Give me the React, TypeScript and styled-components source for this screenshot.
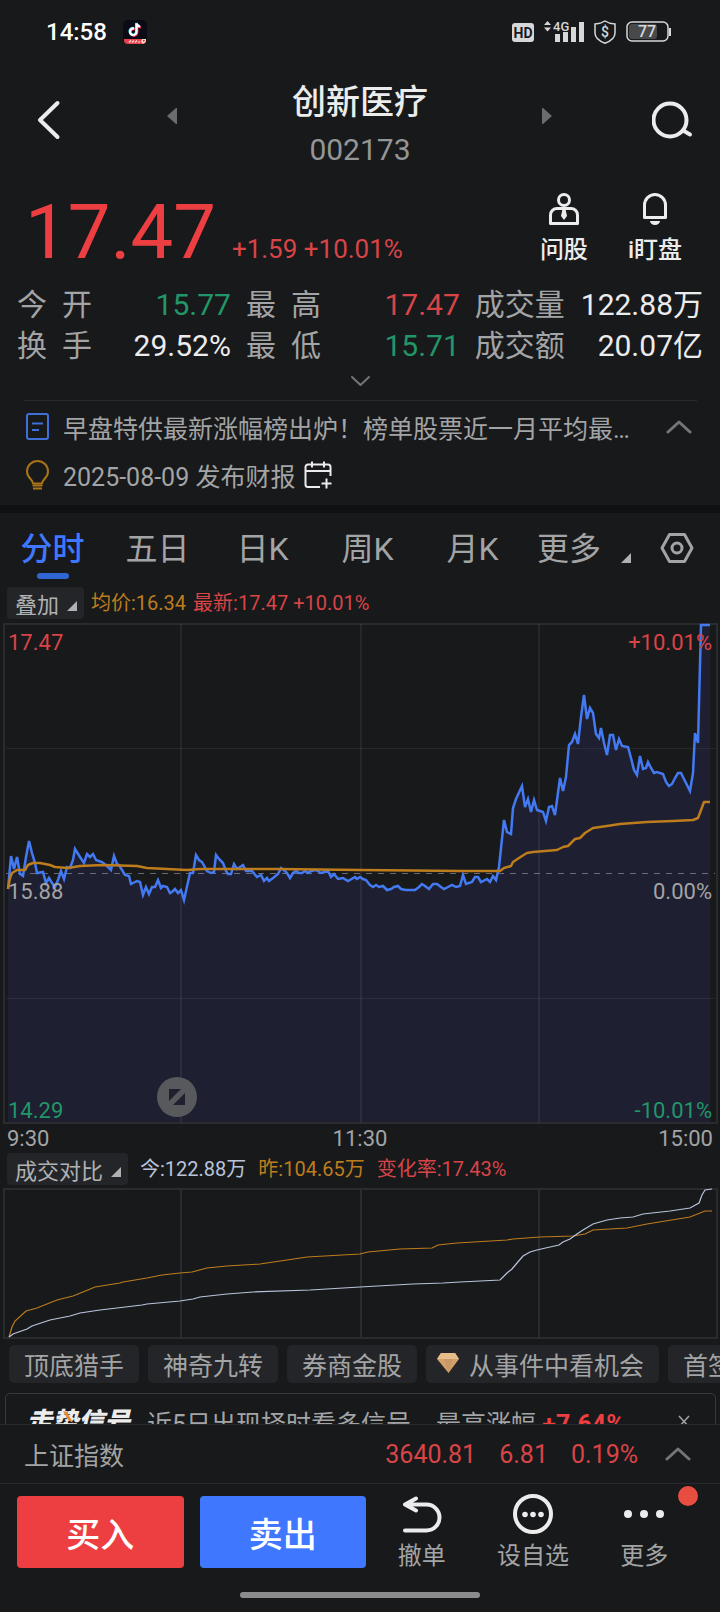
import React from "react";
import styled, { createGlobalStyle } from "styled-components";

const c = {
  bg: "#18191b",
  band: "#0f1113",
  line: "#292a2d",
  chip: "#232528",
  white: "#ececed",
  grey: "#a3a4a5",
  dim: "#747577",
  red: "#ed3e42",
  redText: "#d94447",
  green: "#229669",
  orange: "#bd7d1d",
  blue: "#3f78ff",
  pale: "#b9c4dc",
};

const Global = createGlobalStyle`
  *, *::before, *::after { box-sizing: border-box; }
  body { margin: 0; background: ${c.bg}; }
  body, button { font-family: Roboto, "Noto Sans CJK SC", sans-serif; }
  button { margin: 0; padding: 0; border: 0; background: none; color: inherit; cursor: pointer; }
  a { color: inherit; text-decoration: none; }
  svg { display: block; flex: none; }
  dl, dd, dt, h1, p { margin: 0; }
`;

const Page = styled.div`
  display: flex;
  flex-direction: column;
  height: 100vh;
  color: ${c.grey};
  background: ${c.bg};
`;

const Content = styled.main`
  flex: 1;
  min-height: 0;
  overflow: hidden;
`;

/* ---------- status bar ---------- */

const StatusBar = styled.div`
  display: flex;
  align-items: center;
  justify-content: space-between;
  height: 64px;
  padding: 0 48px 0 46px;
`;

const StatusGroup = styled.div<{ $gap: number }>`
  display: flex;
  align-items: center;
  gap: ${(p) => p.$gap}px;
`;

const Clock = styled.span`
  color: #fff;
  font-size: 24px;
  font-weight: 500;
  line-height: 32px;
`;

/* ---------- header ---------- */

const Header = styled.header`
  display: grid;
  grid-template-columns: 1fr 54% 1fr;
  height: 112px;
`;

const HeaderButton = styled.button<{ $end?: boolean }>`
  display: flex;
  align-items: center;
  justify-content: ${(p) => (p.$end ? "flex-end" : "flex-start")};
  padding: 0 26px 0 36px;
`;

const Switcher = styled.div`
  display: flex;
  justify-content: space-between;
`;

const StepButton = styled.button`
  display: flex;
  align-items: center;
  height: 104px;
`;

const Titles = styled.div`
  padding-top: 14px;
  text-align: center;
`;

const StockName = styled.h1`
  color: ${c.white};
  font-size: 34px;
  font-weight: 500;
  line-height: 48px;
`;

const StockCode = styled.p`
  margin-top: 4px;
  color: #949596;
  font-size: 30px;
  line-height: 40px;
`;

/* ---------- quote ---------- */

const Quote = styled.section`
  display: flex;
  justify-content: space-between;
  padding: 16px 38px 0 25px;
`;

const PriceLine = styled.div`
  display: flex;
  align-items: baseline;
  gap: 16px;
  height: 80px;
`;

const Price = styled.strong`
  color: ${c.red};
  font-size: 76px;
  font-weight: 400;
  line-height: 80px;
`;

const Change = styled.span`
  color: ${c.redText};
  font-size: 26px;
  line-height: 32px;
`;

const QuoteActions = styled.div`
  display: flex;
  gap: 40px;
  height: 80px;
`;

const QuoteAction = styled.button`
  display: flex;
  flex-direction: column;
  align-items: center;
  gap: 7px;
  color: ${c.white};
  font-size: 24px;
  font-weight: 500;
  line-height: 30px;
`;

const Stats = styled.dl`
  display: grid;
  grid-template-columns: 15fr 15fr 16fr;
  column-gap: 15px;
  margin-top: 12px;
  padding: 0 17px;
  font-size: 30px;
  line-height: 41px;
`;

const Stat = styled.div`
  display: flex;
  justify-content: space-between;
  height: 41px;
  white-space: nowrap;
`;

const StatLabel = styled.dt<{ $spread: boolean }>`
  width: ${(p) => (p.$spread ? "75px" : "auto")};
  text-align-last: justify;
`;

const StatValue = styled.dd<{ $color: string }>`
  color: ${(p) => p.$color};
`;

const ExpandButton = styled.button`
  display: flex;
  justify-content: center;
  width: 100%;
  height: 34px;
  padding-top: 9px;
`;

/* ---------- news ---------- */

const News = styled.section`
  margin: 0 23px 0 24px;
  padding: 2px 0 6px;
  border-top: 1px solid ${c.line};
`;

const NewsRow = styled.div`
  display: flex;
  align-items: center;
  height: 48px;
  font-size: 25px;
  white-space: nowrap;
`;

const NewsLink = styled.a`
  display: flex;
  align-items: center;
  gap: 13px;
  min-width: 0;
`;

const NewsToggle = styled.button`
  margin-left: auto;
  padding: 8px 5px;
`;

const CalendarButton = styled.button`
  margin-left: 8px;
`;

const Band = styled.div`
  height: 8px;
  background: ${c.band};
`;

/* ---------- tabs ---------- */

const Tabs = styled.div`
  display: grid;
  grid-template-columns: repeat(5, 105fr) 195fr;
  height: 72px;
  margin-bottom: 2px;
`;

const Tab = styled.button<{ $active?: boolean }>`
  position: relative;
  color: ${(p) => (p.$active ? c.blue : c.grey)};
  font-size: 32px;
  font-weight: ${(p) => (p.$active ? 500 : 400)};
  line-height: 72px;

  &::after {
    content: "";
    display: ${(p) => (p.$active ? "block" : "none")};
    position: absolute;
    bottom: 6px;
    left: calc(50% - 16px);
    width: 32px;
    height: 6px;
    border-radius: 3px;
    background: #2f66d2;
  }
`;

const TabsEnd = styled.div`
  display: flex;
  justify-content: space-between;
  padding: 0 26px 0 12px;
`;

const MoreTab = styled(Tab)`
  display: flex;
  align-items: center;
  gap: 20px;

  > svg {
    margin-top: 18px;
  }
`;

/* ---------- charts ---------- */

const Legend = styled.div<{ $gap: number }>`
  display: flex;
  align-items: center;
  gap: ${(p) => p.$gap}px;
  height: 32px;
  padding-left: 7px;
  font-size: 20px;
  line-height: 32px;
  white-space: nowrap;
`;

const OverlayButton = styled.button`
  display: flex;
  align-items: center;
  gap: 8px;
  height: 32px;
  padding: 0 7px 0 8px;
  border-radius: 4px;
  background: ${c.chip};
  color: #b0b1b2;
  font-size: 22px;

  > svg {
    margin-top: 6px;
  }
`;

const LegendItem = styled.span<{ $color: string }>`
  color: ${(p) => p.$color};
`;

const ChartBox = styled.div<{ $height: number; $top: number }>`
  position: relative;
  height: ${(p) => p.$height}px;
  margin: ${(p) => p.$top}px 2px 0 3px;

  > svg {
    width: 100%;
    height: 100%;
  }
`;

const ScaleLabel = styled.span<{ $y: number; $color: string; $right?: boolean }>`
  position: absolute;
  top: ${(p) => p.$y}px;
  ${(p) => (p.$right ? "right: 6px;" : "left: 5px;")}
  color: ${(p) => p.$color};
  font-size: 22px;
  line-height: 26px;
`;

const FullscreenButton = styled.button`
  position: absolute;
  bottom: 7px;
  left: 154px;
`;

const TimeAxis = styled.div`
  display: grid;
  grid-template-columns: 1fr auto 1fr;
  padding: 0 7px;
  font-size: 22px;
  line-height: 29px;

  > :last-child {
    text-align: right;
  }
`;

/* ---------- chips and banner ---------- */

const Chips = styled.nav`
  display: flex;
  gap: 9px;
  margin-top: 6px;
  padding-left: 9px;
  overflow: hidden;
`;

const Chip = styled.button<{ $icon?: boolean }>`
  display: flex;
  flex: none;
  align-items: center;
  gap: 9px;
  height: 38px;
  padding: 0 15px 0 ${(p) => (p.$icon ? 10 : 15)}px;
  border-radius: 5px;
  background: ${c.chip};
  color: ${c.grey};
  font-size: 25px;
  white-space: nowrap;
`;

const Banner = styled.section`
  display: flex;
  align-items: center;
  height: 58px;
  margin: 10px 4px 0 5px;
  padding: 0 24px 0 20px;
  border: 1px solid #38393c;
  border-radius: 5px;
  font-size: 25px;
  white-space: nowrap;
`;

const BannerLogo = styled.strong`
  position: relative;
  margin-right: 17px;
  color: ${c.white};
  font-size: 26px;
  font-style: italic;
  font-weight: 900;
  line-height: 54px;

  > svg {
    position: absolute;
    top: 16px;
    left: 37px;
  }
`;

const BannerRise = styled.span`
  margin-left: 25px;

  > b {
    color: ${c.red};
  }
`;

const BannerClose = styled.button`
  margin-left: auto;
`;

/* ---------- dock ---------- */

const Dock = styled.footer`
  flex: none;
  border-top: 1px solid ${c.line};
`;

const IndexRow = styled.div`
  display: flex;
  align-items: center;
  gap: 23px;
  height: 59px;
  padding: 0 25px 0 24px;
  border-bottom: 1px solid ${c.line};
  font-size: 25px;
`;

const IndexName = styled.span`
  margin-right: auto;
`;

const IndexValue = styled.span`
  color: ${c.redText};
`;

const IndexToggle = styled.button`
  padding: 8px 4px;
`;

const Actions = styled.div`
  display: grid;
  grid-template-columns: 349fr 334fr;
  padding: 12px 20px 0 17px;
`;

const TradeButtons = styled.div`
  display: grid;
  grid-template-columns: 1fr 1fr;
  gap: 16px;
`;

const TradeButton = styled.button<{ $color: string }>`
  height: 72px;
  border-radius: 4px;
  background: ${(p) => p.$color};
  color: #fff;
  font-size: 34px;
  font-weight: 500;
`;

const DockItems = styled.div`
  display: grid;
  grid-template-columns: repeat(3, 1fr);
`;

const DockItem = styled.button`
  position: relative;
  display: flex;
  flex-direction: column;
  align-items: center;
  justify-content: space-between;
  font-size: 24px;
  line-height: 24px;

  > svg {
    overflow: visible;
  }
`;

const Badge = styled.span`
  position: absolute;
  top: -10px;
  right: 2px;
  width: 20px;
  height: 20px;
  border-radius: 50%;
  background: #e84e40;
`;

const HomeBar = styled.div`
  width: 240px;
  height: 6px;
  margin: 24px auto 14px;
  border-radius: 3px;
  background: #8b8c8e;
`;

/* ---------- icons ---------- */

const Corner = () => (
  <svg width="10" height="10" viewBox="0 0 10 10">
    <path d="M10 0V10H0Z" fill="#b0b1b2" />
  </svg>
);

const Chevron = ({ up, size, width }: { up?: boolean; size: number; width: number }) => (
  <svg width={size} height="14" viewBox={`0 0 ${size} 14`} fill="none" stroke={c.dim} strokeWidth={width} strokeLinecap="round" strokeLinejoin="round">
    <path d={up ? `M2 12L${size / 2} 2L${size - 2} 12` : `M2 2L${size / 2} 10L${size - 2} 2`} />
  </svg>
);

const AppIcon = () => (
  <svg width="24" height="24" viewBox="0 0 24 24">
    <rect width="24" height="24" rx="5" fill="#0a0b16" />
    <g fill="none" strokeWidth="2.2">
      <path d="M11.2 8.6a3.3 3.3 0 1 0 2.4 3.2V3.4c.4 2 1.7 3 3.6 3.2" stroke="#ee2d52" transform="translate(.7 .7)" />
      <path d="M11.2 8.6a3.3 3.3 0 1 0 2.4 3.2V3.4c.4 2 1.7 3 3.6 3.2" stroke="#35e0e4" transform="translate(-.5 -.5)" />
      <path d="M11.2 8.6a3.3 3.3 0 1 0 2.4 3.2V3.4c.4 2 1.7 3 3.6 3.2" stroke="#fff" />
    </g>
    <path d="M1 19h22v1a4 4 0 0 1-4 4H5a4 4 0 0 1-4-4z" fill="#e8414f" />
    <path d="M6 22.5l2-2M9 22.5l2-2M12 22.5l2-2M15 22h2" stroke="#ffd9d9" strokeWidth="1.2" />
    <path d="M19 19h4v1.5a3.5 3.5 0 0 1-3 3.2l-2-1.7z" fill="#f6dcc0" />
    <circle cx="20.8" cy="20.8" r="1" fill="#d33" />
  </svg>
);

const svgFont = { fontFamily: "Roboto, sans-serif" };

const HdIcon = () => (
  <svg width="22" height="20" viewBox="0 0 22 20">
    <rect y="1" width="22" height="19" rx="3" fill="#d6d7d8" />
    <text x="11" y="16" textAnchor="middle" fontSize="14" fontWeight="700" fill={c.bg} {...svgFont}>HD</text>
  </svg>
);

const SignalIcon = () => (
  <svg width="40" height="24" viewBox="0 0 40 24">
    <path d="M0 5l3.5-4L7 5zM0 7.500h7l-3.500 4z" fill="#d6d7d8" />
    <text x="9" y="11" fontSize="13" fontWeight="500" fill="#d6d7d8" {...svgFont}>4G</text>
    <path d="M11 14h5v8h-5zM19 12h5v10h-5zM27 7h5v15h-5zM35 2h5v20h-5z" fill="#d6d7d8" />
  </svg>
);

const ShieldIcon = () => (
  <svg width="22" height="24" viewBox="0 0 22 24">
    <path d="M11 1c3 2 6.5 2.8 10 3v9c0 5-4 8-10 10.200C5 21 1 18 1 13V4c3.500-.2 7-1 10-3z" fill="none" stroke="#d6d7d8" strokeWidth="1.5" />
    <text x="11" y="17" textAnchor="middle" fontSize="14" fontWeight="500" fill="#d6d7d8" {...svgFont}>$</text>
  </svg>
);

const BatteryIcon = () => (
  <svg width="46" height="22" viewBox="0 0 46 22">
    <rect x="1" y="1" width="41" height="19" rx="5" fill="none" stroke="#d6d7d8" strokeWidth="1.5" />
    <rect x="3" y="3" width="28" height="15" rx="3" fill="#48494b" />
    <path d="M44 7v8" stroke="#d6d7d8" strokeWidth="2" />
    <text x="21" y="16" textAnchor="middle" fontSize="16" fontWeight="500" fill="#d6d7d8" {...svgFont}>77</text>
  </svg>
);

const BackIcon = () => (
  <svg width="26" height="42" viewBox="0 0 26 42" fill="none" stroke={c.white} strokeWidth="4" strokeLinecap="round" strokeLinejoin="round">
    <path d="M21.5 4L4 21L21.5 38" />
  </svg>
);

const SearchIcon = () => (
  <svg width="42" height="40" viewBox="0 0 42 40" fill="none" stroke={c.white} strokeWidth="4" strokeLinecap="round">
    <circle cx="18" cy="20" r="16.5" />
    <path d="M32 31L38 34.5" />
  </svg>
);

const StepIcon = ({ right }: { right?: boolean }) => (
  <svg width="12" height="16" viewBox="0 0 12 16" fill="#6b6c6e">
    <path d={right ? "M0 0L1 0L10 8L1 16L0 16Z" : "M11 0L10 0L1 8L10 16L11 16Z"} />
  </svg>
);

const AdvisorIcon = () => (
  <svg width="36" height="36" viewBox="0 0 36 36" fill="none" stroke={c.white} strokeWidth="3">
    <circle cx="18" cy="8" r="5.5" />
    <path d="M4.5 31.5V23a6.5 6.5 0 0 1 6.5-6.5h14a6.5 6.5 0 0 1 6.5 6.5v8.5z" strokeLinejoin="round" />
    <path d="M16.5 17h3l1.5 7-3 4-3-4z" fill={c.white} stroke="none" />
  </svg>
);

const BellIcon = () => (
  <svg width="36" height="36" viewBox="0 0 36 36">
    <path d="M7.5 25.5V13a10.5 10.5 0 0 1 21 0v12.5z" fill="none" stroke={c.white} strokeWidth="3" strokeLinejoin="round" />
    <path d="M13 29h10a5 4 0 0 1-10 0z" fill={c.white} />
  </svg>
);

const NoteIcon = () => (
  <svg width="26" height="28" viewBox="0 0 26 28" fill="none" stroke="#3f6fd8" strokeWidth="2">
    <rect x="3" y="1" width="21" height="25" rx="2" />
    <path d="M8 10.5h11M8 17h7" />
  </svg>
);

const BulbIcon = () => (
  <svg width="26" height="30" viewBox="0 0 26 30" fill="none" stroke="#a87417" strokeWidth="2">
    <path d="M9 23.5c0-4-6-5.5-6-12a10.5 10.5 0 0 1 21 0c0 6.5-6 8-6 12z" strokeLinejoin="round" />
    <path d="M8.5 25.5h10M9 28.5h9" />
  </svg>
);

const CalendarIcon = () => (
  <svg width="30" height="30" viewBox="0 0 30 30" fill="none" stroke={c.white} strokeWidth="2">
    <path d="M17 27H5a2.5 2.5 0 0 1-2.5-2.5V7A2.5 2.5 0 0 1 5 4.5h20A2.5 2.5 0 0 1 27.5 7v9M2.5 11h25M9 1.5v6M21 1.5v6" />
    <path d="M23.5 18.5v10M18.5 23.5h10" />
  </svg>
);

const HexIcon = () => (
  <svg width="34" height="34" viewBox="0 0 34 34" fill="none" stroke={c.grey} strokeWidth="3">
    <path d="M9.5 2.500h15L32 16l-7.500 13.500h-15L2 16z" strokeLinejoin="round" />
    <circle cx="17" cy="16" r="5" />
  </svg>
);

const GemIcon = () => (
  <svg width="24" height="24" viewBox="0 0 24 24">
    <path d="M5 1h14l4 6-10.5 14L1 7z" fill="#d3a06a" />
    <path d="M5 1h14l4 6H1z" fill="#e8bd8c" />
    <path d="M8 7h9l-4.500 14z" fill="#c99a68" />
  </svg>
);

const ResizeIcon = () => (
  <svg width="40" height="40" viewBox="0 0 40 40">
    <circle cx="20" cy="20" r="20" fill="#58595d" />
    <path d="M12 12h12L12 24zM28 16v12H16z" fill="#1e1f2f" />
  </svg>
);

const CloseIcon = () => (
  <svg width="14" height="14" viewBox="0 0 14 14" stroke={c.grey} strokeWidth="1.5">
    <path d="M2 1L12 12M12 1L2 12" />
  </svg>
);

const UndoIcon = () => (
  <svg width="42" height="38" viewBox="0 0 42 38" fill="none" stroke={c.white} strokeWidth="4" strokeLinecap="round" strokeLinejoin="round">
    <path d="M4 34.5H25.5A13 13 0 0 0 25.5 8.5H4M15 2.5L4 8.5L15 14.5" />
  </svg>
);

const WatchIcon = () => (
  <svg width="40" height="38" viewBox="0 0 40 38" fill={c.white}>
    <circle cx="20" cy="18" r="18" fill="none" stroke={c.white} strokeWidth="4" />
    <circle cx="12" cy="18.5" r="2.8" />
    <circle cx="20" cy="18.5" r="2.8" />
    <circle cx="28" cy="18.5" r="2.8" />
  </svg>
);

const DotsIcon = () => (
  <svg width="40" height="38" viewBox="0 0 40 38" fill={c.white}>
    <circle cx="4" cy="18" r="4" />
    <circle cx="20" cy="18" r="4" />
    <circle cx="36" cy="18" r="4" />
  </svg>
);

/* ---------- chart data ---------- */

const priceLine =
  "5,266 8,233 11,246 14,234 17,251 20,253 23,234 26,218 29,230 32,240 34,250 40,249 43,260 46,255 49,260 52,264 55,257 58,248 61,256 64,244 67,245 70,237 72,226 77,234 81,240 84,231 87,234 90,231 93,237 99,239 104,243 108,247 111,233 114,241 116,242 122,252 126,253 128,261 134,258 137,259 140,272 143,264 146,271 149,264 152,264 155,257 158,265 160,263 164,264 167,270 169,269 172,266 175,270 178,267 181,277 187,250 190,250 193,232 196,237 199,239 204,248 208,250 211,249 213,232 216,236 220,240 223,248 225,251 228,251 231,241 234,246 240,242 243,248 249,248 254,254 258,252 261,258 264,255 266,258 270,255 275,251 278,245 281,247 284,250 287,255 290,250 293,248 296,250 299,250 302,248 305,250 308,248 313,247 318,250 325,248 328,254 331,251 335,256 340,255 345,258 352,254 354,256 357,254 360,256 363,257 367,262 370,264 373,262 376,264 380,263 384,267 388,266 391,264 395,263 398,266 403,267 412,267 416,264 419,261 422,263 426,266 430,261 434,261 438,264 441,266 445,264 449,262 453,264 457,263 460,252 463,261 469,259 472,254 475,254 478,259 484,256 487,259 490,253 493,257 496,244 501,197 504,209 508,211 510,185 513,176 519,163 522,184 525,176 528,189 531,177 534,187 540,189 543,198 546,184 549,183 552,192 557,155 560,168 563,154 566,122 569,119 572,111 575,121 578,94 581,72 584,96 587,85 590,90 593,111 596,115 598,105 601,120 604,132 607,112 610,112 613,127 616,116 619,123 625,124 628,135 631,147 634,152 637,133 640,146 643,145 645,139 648,145 651,150 654,149 660,151 663,159 666,163 669,161 672,155 675,150 678,150 681,156 687,168 690,150 692,110 695,120 698,2 707,2";

const averageLine =
  "5,266 7,255 9,250 14,247 22,247 25,242 30,240 37,240 47,242 52,244 65,245 77,243 100,242 134,243 144,245 164,246 184,247 197,246 274,246 357,247 457,248 497,248 501,245 508,243 510,239 519,233 524,230 530,229 554,227 560,224 565,223 572,216 577,215 582,210 590,205 604,203 617,201 644,199 670,198 690,197 695,195 698,187 701,179 707,179";

const todayLine =
  "6,149 10,146 24,141 29,138 47,132 67,128 77,125 97,122 114,120 139,117 144,116 177,113 190,111 197,109 224,106 250,104 307,102 357,99 410,96 440,95 457,94 497,92 500,89 504,85 509,81 514,75 520,68 527,64 534,62 547,59 556,57 560,54 567,51 574,46 580,42 590,36 604,32 617,30 630,29 640,26 667,23 687,20 696,15 699,7 702,2 709,1";

const yesterdayLine =
  "6,149 9,139 12,133 23,123 34,120 54,112 70,108 80,104 92,99 117,95 120,94 144,90 159,87 177,85 189,84 204,80 224,78 257,76 284,72 304,69 357,66 365,64 397,61 429,60 435,57 454,55 504,52 510,51 537,49 570,48 582,46 590,42 624,40 644,36 687,29 702,23 709,23";

const PriceChart = () => (
  <svg viewBox="0 0 715 501" preserveAspectRatio="none" role="img" aria-label="分时走势">
    <polygon points={`5,500 ${priceLine} 707,500`} fill="#1e1f30" />
    <g fill="none" stroke="#8f93ad" strokeOpacity="0.12" strokeWidth="2">
      <rect x="1" y="1" width="713" height="499" stroke="#2a2b2e" strokeOpacity="1" />
      <path d="M178 1V500M358 1V500M536 1V500" />
      <path d="M3 125.5H712M3 375.5H712" strokeWidth="1" />
    </g>
    <path d="M3 250.5H712" stroke="#b4b8cc" strokeOpacity="0.5" strokeDasharray="6 6" />
    <polyline points={priceLine} fill="none" stroke="#437af2" strokeWidth="2.5" strokeLinejoin="miter" />
    <polyline points={averageLine} fill="none" stroke={c.orange} strokeWidth="2.5" strokeLinejoin="round" />
  </svg>
);

const VolumeChart = () => (
  <svg viewBox="0 0 715 151" preserveAspectRatio="none" role="img" aria-label="成交对比">
    <g fill="none" stroke="#2a2b2e" strokeWidth="2">
      <rect x="1" y="1" width="713" height="149" />
      <path d="M178 1V150M358 1V150M536 1V150" />
    </g>
    <polyline points={yesterdayLine} fill="none" stroke={c.orange} strokeWidth="1.2" />
    <polyline points={todayLine} fill="none" stroke={c.pale} strokeWidth="1.2" />
  </svg>
);

const stats = [
  { label: "今 开", value: "15.77", color: c.green },
  { label: "最 高", value: "17.47", color: c.redText },
  { label: "成交量", value: "122.88万", color: c.white },
  { label: "换 手", value: "29.52%", color: c.white },
  { label: "最 低", value: "15.71", color: c.green },
  { label: "成交额", value: "20.07亿", color: c.white },
];

export default function App() {
  return (
    <Page>
      <Global />
      <Content>
        <StatusBar>
          <StatusGroup $gap={16}>
            <Clock>14:58</Clock>
            <AppIcon />
          </StatusGroup>
          <StatusGroup $gap={10}>
            <HdIcon />
            <SignalIcon />
            <ShieldIcon />
            <BatteryIcon />
          </StatusGroup>
        </StatusBar>

        <Header>
          <HeaderButton aria-label="返回"><BackIcon /></HeaderButton>
          <Switcher>
            <StepButton aria-label="上一只"><StepIcon /></StepButton>
            <Titles>
              <StockName>创新医疗</StockName>
              <StockCode>002173</StockCode>
            </Titles>
            <StepButton aria-label="下一只"><StepIcon right /></StepButton>
          </Switcher>
          <HeaderButton $end aria-label="搜索"><SearchIcon /></HeaderButton>
        </Header>

        <Quote>
          <PriceLine>
            <Price>17.47</Price>
            <Change>+1.59 +10.01%</Change>
          </PriceLine>
          <QuoteActions>
            <QuoteAction><AdvisorIcon />问股</QuoteAction>
            <QuoteAction><BellIcon />i盯盘</QuoteAction>
          </QuoteActions>
        </Quote>

        <Stats>
          {stats.map((s) => (
            <Stat key={s.label}>
              <StatLabel $spread={s.label.includes(" ")}>{s.label}</StatLabel>
              <StatValue $color={s.color}>{s.value}</StatValue>
            </Stat>
          ))}
        </Stats>
        <ExpandButton aria-label="展开行情"><Chevron size={21} width={2} /></ExpandButton>

        <News>
          <NewsRow>
            <NewsLink href="#news"><NoteIcon />早盘特供最新涨幅榜出炉！榜单股票近一月平均最…</NewsLink>
            <NewsToggle aria-label="收起"><Chevron up size={26} width={3} /></NewsToggle>
          </NewsRow>
          <NewsRow>
            <NewsLink href="#report"><BulbIcon />2025-08-09 发布财报</NewsLink>
            <CalendarButton aria-label="添加日程"><CalendarIcon /></CalendarButton>
          </NewsRow>
        </News>
        <Band />

        <Tabs>
          <Tab $active>分时</Tab>
          <Tab>五日</Tab>
          <Tab>日K</Tab>
          <Tab>周K</Tab>
          <Tab>月K</Tab>
          <TabsEnd>
            <MoreTab>更多<Corner /></MoreTab>
            <button aria-label="设置"><HexIcon /></button>
          </TabsEnd>
        </Tabs>

        <Legend $gap={7}>
          <OverlayButton>叠加<Corner /></OverlayButton>
          <LegendItem $color={c.orange}>均价:16.34</LegendItem>
          <LegendItem $color={c.redText}>最新:17.47 +10.01%</LegendItem>
        </Legend>

        <ChartBox $height={501} $top={4}>
          <PriceChart />
          <ScaleLabel $y={7} $color={c.redText}>17.47</ScaleLabel>
          <ScaleLabel $y={7} $color={c.redText} $right>+10.01%</ScaleLabel>
          <ScaleLabel $y={256} $color={c.grey}>15.88</ScaleLabel>
          <ScaleLabel $y={256} $color={c.grey} $right>0.00%</ScaleLabel>
          <ScaleLabel $y={475} $color={c.green}>14.29</ScaleLabel>
          <ScaleLabel $y={475} $color={c.green} $right>-10.01%</ScaleLabel>
          <FullscreenButton aria-label="全屏"><ResizeIcon /></FullscreenButton>
        </ChartBox>
        <TimeAxis>
          <span>9:30</span>
          <span>11:30</span>
          <span>15:00</span>
        </TimeAxis>

        <Legend $gap={12}>
          <OverlayButton>成交对比<Corner /></OverlayButton>
          <LegendItem $color={c.pale}>今:122.88万</LegendItem>
          <LegendItem $color={c.orange}>昨:104.65万</LegendItem>
          <LegendItem $color={c.redText}>变化率:17.43%</LegendItem>
        </Legend>
        <ChartBox $height={151} $top={3}>
          <VolumeChart />
        </ChartBox>

        <Chips>
          <Chip>顶底猎手</Chip>
          <Chip>神奇九转</Chip>
          <Chip>券商金股</Chip>
          <Chip $icon><GemIcon />从事件中看机会</Chip>
          <Chip>首签</Chip>
        </Chips>

        <Banner>
          <BannerLogo>
            走势信号
            <svg width="10" height="12" viewBox="0 0 10 12"><path d="M0 0L4 1L10 12L5 9Z" fill="#e8892b" /></svg>
          </BannerLogo>
          <span>近5日出现择时看多信号</span>
          <BannerRise>最高涨幅 <b>+7.64%</b></BannerRise>
          <BannerClose aria-label="关闭"><CloseIcon /></BannerClose>
        </Banner>
      </Content>

      <Dock>
        <IndexRow>
          <IndexName>上证指数</IndexName>
          <IndexValue>3640.81</IndexValue>
          <IndexValue>6.81</IndexValue>
          <IndexValue>0.19%</IndexValue>
          <IndexToggle aria-label="展开指数"><Chevron up size={26} width={3} /></IndexToggle>
        </IndexRow>
        <Actions>
          <TradeButtons>
            <TradeButton $color={c.red}>买入</TradeButton>
            <TradeButton $color={c.blue}>卖出</TradeButton>
          </TradeButtons>
          <DockItems>
            <DockItem><UndoIcon />撤单</DockItem>
            <DockItem><WatchIcon />设自选</DockItem>
            <DockItem><DotsIcon />更多<Badge /></DockItem>
          </DockItems>
        </Actions>
        <HomeBar />
      </Dock>
    </Page>
  );
}
